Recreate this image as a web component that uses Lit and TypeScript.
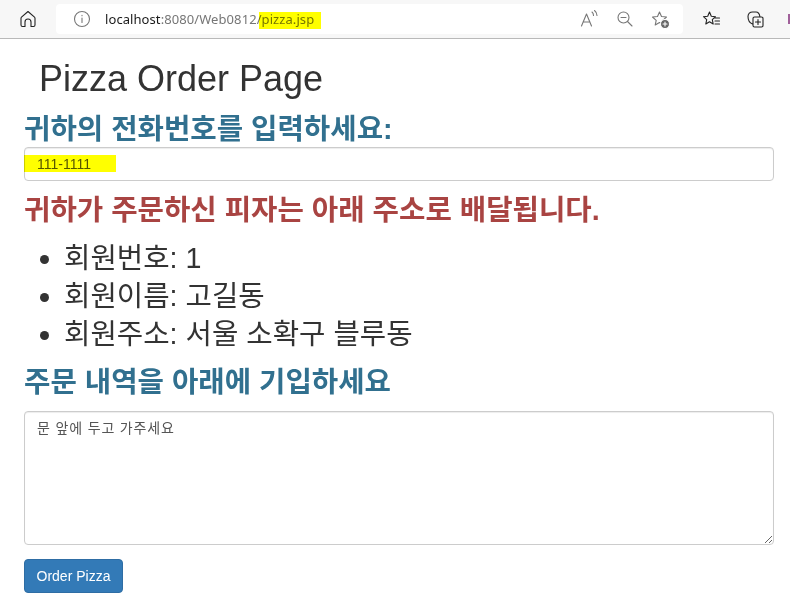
import { LitElement, html, css, svg } from "lit";
import { customElement } from "lit/decorators.js";

const icon = (body: unknown, cls = "ic") => html`<svg class=${cls} viewBox="0 0 20 20" fill="none" stroke="currentColor" stroke-width="1.1" stroke-linecap="round" stroke-linejoin="round">${body}</svg>`;

@customElement("app-root")
export class AppRoot extends LitElement {
  static styles = css`
    :host { display: block; width: 790px; height: 606px; overflow: hidden; background: #fff; position: relative; color: #333; font-family: "Liberation Sans", "Noto Sans CJK KR", sans-serif; }
    .bar { height: 38px; box-sizing: content-box; background: #f7f7f7; border-bottom: 1px solid #b9b9b9; display: flex; align-items: center; padding-left: 18px; }
    .ic { width: 20px; height: 20px; flex: none; display: block; }
    .home { color: #222; margin-right: 18px; }
    .addr { width: 627px; height: 30px; background: #fff; border-radius: 4px; display: flex; align-items: center; padding-left: 16px; box-sizing: border-box; color: #777; flex: none; }
    .url { margin-left: 13px; font-family: "Noto Sans", sans-serif; font-size: 13px; letter-spacing: 0.08px; color: #767676; flex: 1; }
    .url b { font-weight: 400; color: #1a1a1a; }
    .acts { display: flex; gap: 15px; margin-right: 13px; }
    .side { display: flex; gap: 24px; margin-left: 19px; color: #222; }
    .edge { position: absolute; left: 788px; top: 14px; width: 2px; height: 10px; background: #a0609a; }
    .mark { position: absolute; background: #ffff00; mix-blend-mode: multiply; }
    .m1 { left: 259px; top: 12px; width: 62px; height: 17px; }
    .m2 { left: 24px; top: 155px; width: 92px; height: 17px; }
    main { padding: 0 16px 0 24px; }
    h1 { font-size: 36px; font-weight: 400; line-height: 40px; margin: 0; padding: 20px 0 0 15px; }
    h2 { font-size: 28.7px; font-weight: 700; line-height: 36px; margin: 0; color: #31708f; }
    .q1 { margin-top: 12px; }
    .danger { color: #a94442; margin-top: 11px; }
    input, textarea { display: block; width: 100%; box-sizing: border-box; border: 1px solid #ccc; border-radius: 4px; font: 14px/20px "Liberation Sans", "Noto Sans CJK KR", sans-serif; color: #555; padding: 6px 12px; background: #fff; box-shadow: inset 0 1px 1px rgba(0,0,0,.075); outline: none; margin: 0; }
    input { height: 34px; }
    textarea { height: 134px; margin-top: 11px; letter-spacing: 0.85px; }
    ul { margin: 11px 0 0; padding: 0 0 0 40px; font-size: 28.7px; line-height: 38px; }
    .q2 { margin-top: 11px; }
    button { display: block; margin-top: 14px; width: 99px; height: 34px; border: 1px solid #2e6da4; border-radius: 4px; background: #337ab7; color: #fff; font: 14px/20px "Liberation Sans", sans-serif; padding: 0; }
  `;

  render() {
    return html`
      <div class="bar">
        ${icon(svg`<path d="M3 16V9.200a1.500 1.500 0 0 1 .5-1.100L10 2.500l6.500 5.600a1.500 1.500 0 0 1 .5 1.100V16a1.500 1.500 0 0 1-1.500 1.500H13V13a3 3 0 0 0-6 0v4.500H4.500A1.500 1.500 0 0 1 3 16Z"/>`, "ic home")}
        <div class="addr">
          ${icon(svg`<circle cx="10" cy="10" r="7.500"/><path d="M10 9v4.500M10 6.300v.4"/>`)}
          <span class="url"><b>localhost</b>:8080/Web0812/pizza.jsp</span>
          <div class="acts">
            ${icon(svg`<path d="M1.500 17 6.500 5l5 12M3 13h7M12 3c1 .8 1.500 2 1.500 3.500M14.500 1.500c1.500 1.200 2.500 3 2.500 5"/>`)}
            ${icon(svg`<circle cx="8.500" cy="8.500" r="5.500"/><path d="M6 8.500h5M12.500 12.500 17 17"/>`)}
            ${icon(svg`<path d="M9.500 3 11.500 7.500l5 .5-3.700 3.300 1 4.700-4.300-2.500-4.300 2.500 1-4.700L2.500 8l5-.5Z"/><circle cx="15" cy="15" r="4.500" fill="#666" stroke="#fff"/><path d="M13 15h4M15 13v4" stroke="#fff"/>`)}
          </div>
        </div>
        <div class="side">
          ${icon(svg`<path d="M7.500 3 9.300 7.300l4.200.4-3.200 2.900.9 4.400-3.700-2.300L3.800 15l.9-4.400L1.500 7.700l4.200-.4ZM13 9h4.500M13 12h4.500M13 15h4.500"/>`)}
          ${icon(svg`<path d="M6.500 15C3.500 13.800 2 10.500 2 7.500 2 4.700 4 3 6.500 3H10c2 0 3.500 1.800 4 5M8.500 8H15.500A1.500 1.500 0 0 1 17 9.500V16.500A1.500 1.500 0 0 1 15.500 18H8.500A1.500 1.500 0 0 1 7 16.500V9.500A1.500 1.500 0 0 1 8.500 8ZM12 10.500v5M9.500 13h5"/>`)}
        </div>
      </div>
      <div class="edge"></div>
      <main>
        <h1>Pizza Order Page</h1>
        <h2 class="q1">귀하의 전화번호를 입력하세요:</h2>
        <input value="111-1111" />
        <h2 class="danger">귀하가 주문하신 피자는 아래 주소로 배달됩니다.</h2>
        <ul>
          <li>회원번호: 1</li>
          <li>회원이름: 고길동</li>
          <li>회원주소: 서울 소확구 블루동</li>
        </ul>
        <h2 class="q2">주문 내역을 아래에 기입하세요</h2>
        <textarea>문 앞에 두고 가주세요</textarea>
        <button>Order Pizza</button>
      </main>
      <div class="mark m1"></div>
      <div class="mark m2"></div>
    `;
  }
}
